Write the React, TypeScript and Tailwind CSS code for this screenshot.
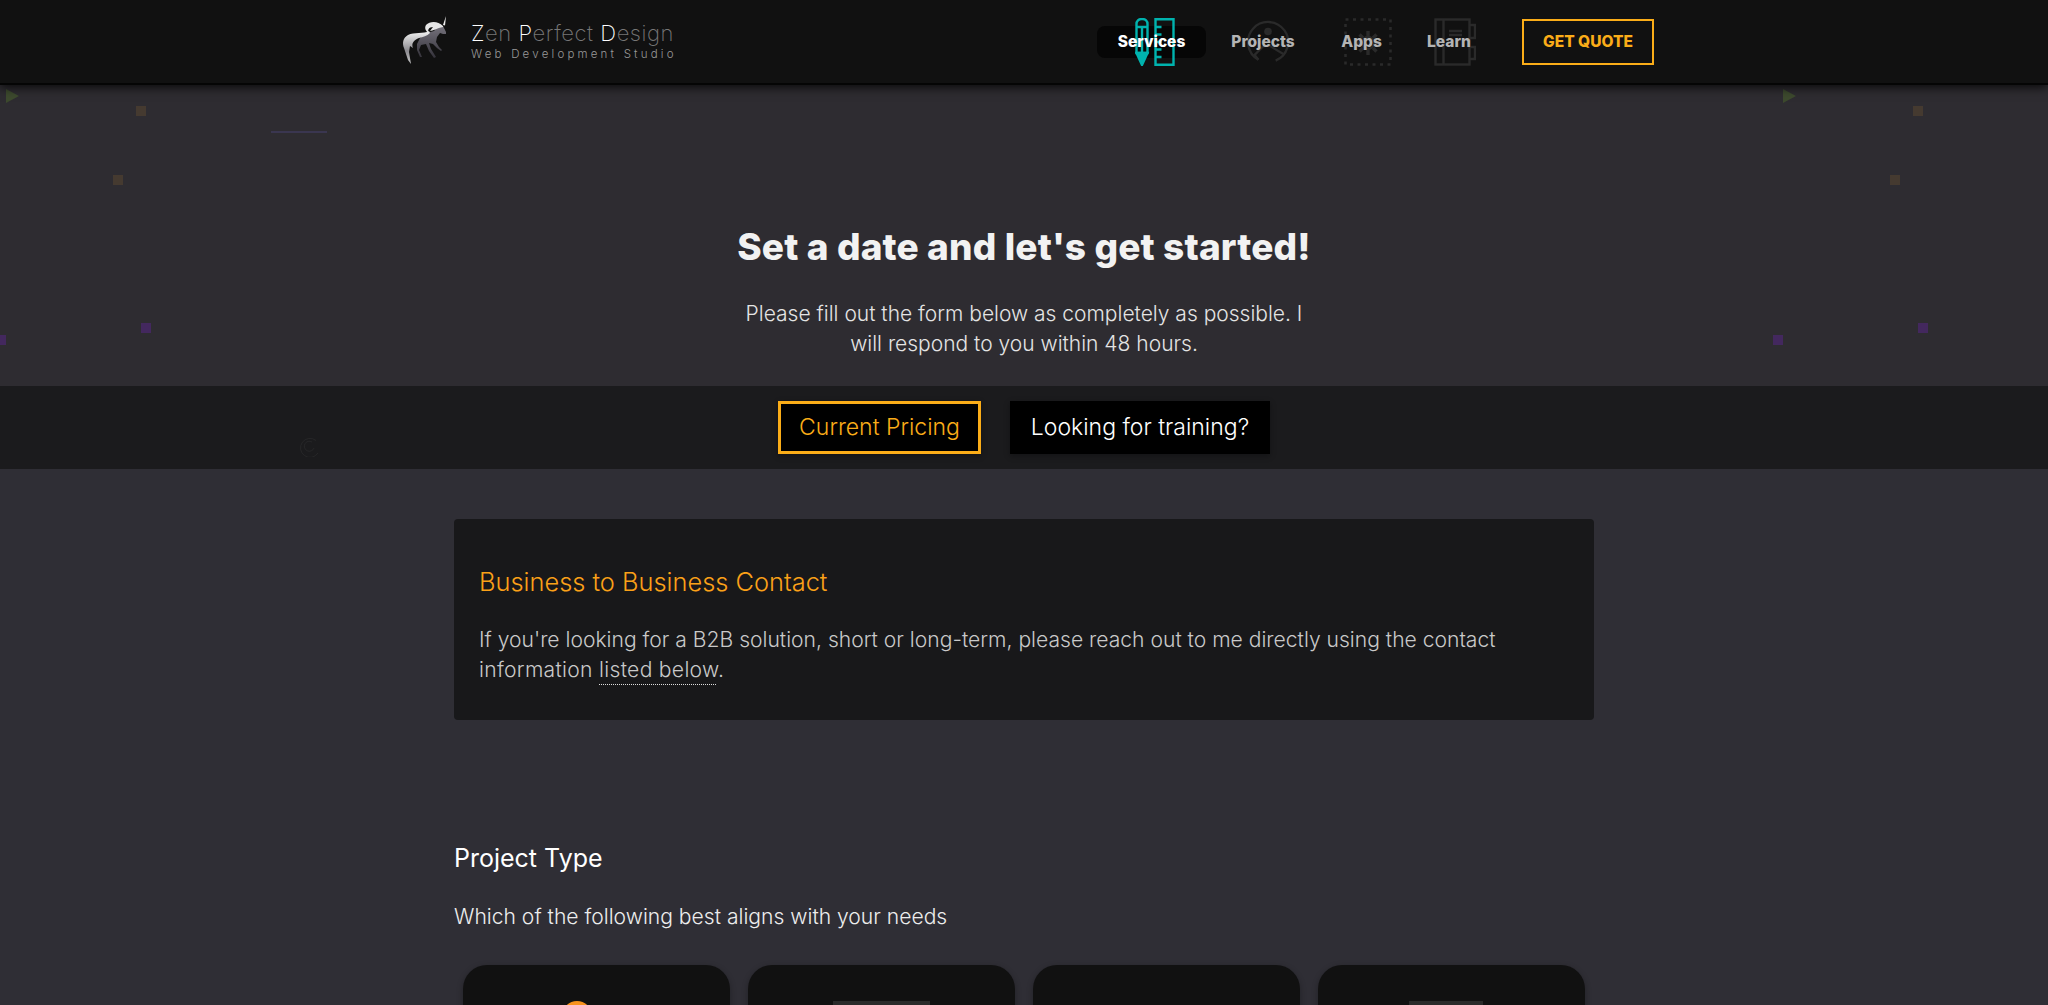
import React from 'react';

const FONT = "font-['Inter','Open_Sans',sans-serif]";

const Unicorn = () => (
  <svg viewBox="0 0 70 60" className="w-[70px] h-[60px] -mt-[4px]">
    <defs>
      <linearGradient id="uniBody" x1="0" y1="0" x2="0" y2="1">
        <stop offset="0" stopColor="#75727c" />
        <stop offset="1" stopColor="#34323a" />
      </linearGradient>
      <linearGradient id="uniTail" x1="0" y1="0" x2="0" y2="1">
        <stop offset="0" stopColor="#f4f4f4" />
        <stop offset="0.6" stopColor="#8b8a8f" />
        <stop offset="1" stopColor="#c8c8c8" />
      </linearGradient>
    </defs>
    <path d="M46 6L43 15l2 .5z" fill="#f0f0f0" />
    <path
      d="M43 16l3 6v2h-3l-3-1-3 4-1 5 3 5 3 3-1 1-4-3-4-4-4-1 2 6 5 8-2 1-5-7-3-7-5 1-2 5 3 7h-2l-3-7 0-6 3-6 7-5 7-2 4-5z"
      fill="url(#uniBody)"
    />
    <path d="M43 16c-5-5-13-5-17-1-2 3 0 7 3 8-2-3 0-6 4-6l-3 4c3 0 7-3 13-4z" fill="#e6e6e6" />
    <path
      d="M29 21c-5 3-15 1-21 4-5 3-6 8-4 13l4 12 3 4-2-12 1-6 3 2c-2-5 1-8 6-10 4-1 8-2 11-5z"
      fill="url(#uniTail)"
    />
  </svg>
);

const PencilRuler = () => (
  <svg viewBox="0 0 40 48" className="w-[40px] h-[48px]" fill="none" stroke="#00b3ae" strokeWidth="2.4">
    <path d="M1.500 6a5 5 0 0 1 5-5h1a5 5 0 0 1 5 5v29h-11z" />
    <path d="M1.500 9h11M7 9v26" />
    <path d="M1.500 35L7 47l5.500-12z" fill="#00b3ae" />
    <path d="M20.500 1.300h18v45.400h-18z" />
    <path d="M20.500 9h6M20.500 16.500h6M20.500 24h6M20.500 31.500h6M20.500 39h6" />
  </svg>
);

const ProjectsIcon = () => (
  <svg viewBox="0 0 46 46" className="w-[44px] h-[44px]" fill="none" stroke="#2a2a2a" strokeWidth="2.400">
    <path d="M13 41.500A21 21 0 1 1 31 42.500" />
    <circle cx="23" cy="12" r="4" fill="#2a2a2a" stroke="none" />
    <path d="M13 41.500l-4-5 9-9 6-1 15 9" />
  </svg>
);

const AppsIcon = () => (
  <svg viewBox="0 0 48 48" className="w-[48px] h-[48px]" fill="none" stroke="#2a2a2a">
    <rect x="1.500" y="1.500" width="45" height="45" strokeWidth="2.600" strokeDasharray="3 4.500" />
    <circle cx="24" cy="25" r="6" strokeWidth="2.400" />
    <path d="M24 13v5M24 32v5M12 25h5M31 25h5M15.500 16.500l3.500 3.500M29 30l3.500 3.500M32.500 16.500L29 20M19 30l-3.500 3.500" strokeWidth="3.400" />
  </svg>
);

const LearnIcon = () => (
  <svg viewBox="0 0 42 48" className="w-[42px] h-[48px]" fill="none" stroke="#2a2a2a" strokeWidth="2.400">
    <rect x="1.500" y="1.500" width="34" height="45" />
    <path d="M9.500 1.500v45M15 13h13M15 17h13" />
    <path d="M35.500 7H41v13h-5.500M35.500 29H41v12h-5.500" />
  </svg>
);

const NavItem = ({
  label,
  active,
  icon,
  width,
}: {
  label: string;
  active?: boolean;
  icon: React.ReactNode;
  width: string;
}) => (
  <div className={`relative flex items-center justify-center h-[32px] rounded-lg ${width} ${active ? 'bg-[#060606]' : ''}`}>
    <div className="absolute inset-0 flex items-center justify-center">{icon}</div>
    <span className={`relative text-[15.5px] font-extrabold ${active ? 'text-white' : 'text-[#b4b4b4]'}`}>{label}</span>
  </div>
);

const Header = () => (
  <header className="relative z-10 h-[85px] bg-[#111111] shadow-[0_2px_10px_rgba(0,0,0,0.85)] border-b-2 border-[#050505] flex items-center">
    <div className="ml-[400px] w-[1254px] flex items-center justify-between">
      <div className="flex items-center">
        <Unicorn />
        <div className="ml-[1px] -mt-[2px]">
          <div className="text-[22px] leading-[24px] font-extralight text-[#777777] tracking-[0.55px]">
            <span className="text-white">Z</span>en <span className="text-white">P</span>erfect{' '}
            <span className="text-white">D</span>esign
          </div>
          <div className="mt-[2px] text-[11.5px] leading-[14px] text-[#999999] font-light tracking-[3.2px]">
            Web Development Studio
          </div>
        </div>
      </div>
      <div className="flex items-center gap-[3px]">
        <NavItem label="Services" active width="w-[109px]" icon={<div className="pl-[6px]"><PencilRuler /></div>} />
        <NavItem label="Projects" width="w-[108px]" icon={<div className="pl-[10px]"><ProjectsIcon /></div>} />
        <NavItem label="Apps" width="w-[83px]" icon={<div className="pl-[12px]"><AppsIcon /></div>} />
        <NavItem label="Learn" width="w-[86px]" icon={<div className="pl-[12px]"><LearnIcon /></div>} />
        <div className="ml-[27px] w-[132px] h-[46px] border-[2px] border-[#fbad18] text-[#fbad18] text-[15.5px] font-extrabold flex items-center justify-center">
          GET QUOTE
        </div>
      </div>
    </div>
  </header>
);

const shapes = [
  { left: 136, top: 106, c: 'bg-[#453a30]' },
  { left: 113, top: 175, c: 'bg-[#453a30]' },
  { left: 141, top: 323, c: 'bg-[#43285e]' },
  { left: -4, top: 335, c: 'bg-[#43285e]' },
  { left: 1913, top: 106, c: 'bg-[#453a30]' },
  { left: 1890, top: 175, c: 'bg-[#453a30]' },
  { left: 1918, top: 323, c: 'bg-[#43285e]' },
  { left: 1773, top: 335, c: 'bg-[#43285e]' },
];

const Particles = () => (
  <>
    {shapes.map((s) => (
      <div key={s.left} className={`absolute w-[10px] h-[10px] ${s.c}`} style={{ left: s.left, top: s.top }} />
    ))}
    <div className="absolute left-[6px] top-[89px] w-0 h-0 border-y-[7px] border-y-transparent border-l-[13px] border-l-[#3d4a2e]" />
    <div className="absolute left-[1783px] top-[89px] w-0 h-0 border-y-[7px] border-y-transparent border-l-[13px] border-l-[#3d4a2e]" />
    <div className="absolute left-[271px] top-[131px] w-[56px] h-[2px] bg-[#3a3650]" />
  </>
);

const ProjectCard = ({ children }: { children?: React.ReactNode }) => (
  <div className="relative w-[267px] h-[200px] bg-[#111111] rounded-[24px] shadow-[0_2px_6px_rgba(0,0,0,0.3)] flex justify-center">
    {children}
  </div>
);

export default function App() {
  return (
    <div className={`relative h-[1005px] overflow-hidden bg-[#2f2e35] ${FONT}`}>
      <Header />

      <section className="h-[301px] bg-[#2e2c31] flex flex-col items-center pt-[140px]">
        <h1 className="text-[37px] leading-[44px] font-extrabold tracking-[0.15px] text-[#f2f2f2]">
          Set a date and let's get started!
        </h1>
        <p className="mt-[30px] w-[590px] text-center text-[21px] leading-[30px] font-light text-[#e4e4e4]">
          Please fill out the form below as completely as possible. I will respond to you within 48 hours.
        </p>
      </section>
      <Particles />

      <section className="relative h-[83px] bg-[#1b1b1d] flex items-center justify-center gap-[29px]">
        <svg viewBox="0 0 20 20" className="absolute left-[299px] top-[51px] w-[20px] h-[20px]" fill="none" stroke="#2b2b2d" strokeWidth="0.7">
          <path d="M19 16A9.500 9.500 0 1 1 17 3.500M13 5a5 5 0 1 0 2 6" />
        </svg>
        <div className="h-[53px] w-[203px] bg-black border-[3px] border-[#fbad18] text-[#fbad18] text-[23px] font-light flex items-center justify-center shadow-[0_2px_6px_rgba(0,0,0,0.3)]">
          Current Pricing
        </div>
        <div className="h-[53px] w-[260px] bg-black text-white text-[23px] font-light flex items-center justify-center shadow-[0_2px_6px_rgba(0,0,0,0.3)]">
          Looking for training?
        </div>
      </section>

      <main className="w-[1140px] mx-auto">
        <div className="mt-[50px] h-[201px] bg-[#18181a] rounded-[4px] px-[25px] pt-[47px]">
          <h2 className="text-[25.4px] leading-[32px] font-light text-[#fba118]">Business to Business Contact</h2>
          <p className="mt-[27px] text-[21.1px] leading-[30px] font-light text-[#c9c9c9]">
            If you're looking for a B2B solution, short or long-term, please reach out to me directly using the contact{' '}
            <span className="tracking-[0.3px]">
              information{' '}
              <span className="underline decoration-dotted decoration-1 decoration-[#dddddd] underline-offset-[7px]">listed below</span>.
            </span>
          </p>
        </div>

        <h3 className="mt-[122px] text-[25px] leading-[32px] font-normal text-white">Project Type</h3>
        <p className="mt-[28px] text-[21.1px] leading-[30px] font-light text-[#ededed]">
          Which of the following best aligns with your needs
        </p>

        <div className="mt-[33px] px-[9px] flex gap-[18px]">
          <ProjectCard>
            <div className="mt-[36px] mr-[40px] w-[30px] h-[30px] rounded-full bg-[#f7931e]" />
          </ProjectCard>
          <ProjectCard>
            <div className="mt-[36px] w-[97px] h-[40px] bg-[#2a2a2a]" />
          </ProjectCard>
          <ProjectCard />
          <ProjectCard>
            <div className="mt-[36px] mr-[12px] w-[74px] h-[40px] bg-[#2a2a2a]" />
          </ProjectCard>
        </div>
      </main>
    </div>
  );
}
